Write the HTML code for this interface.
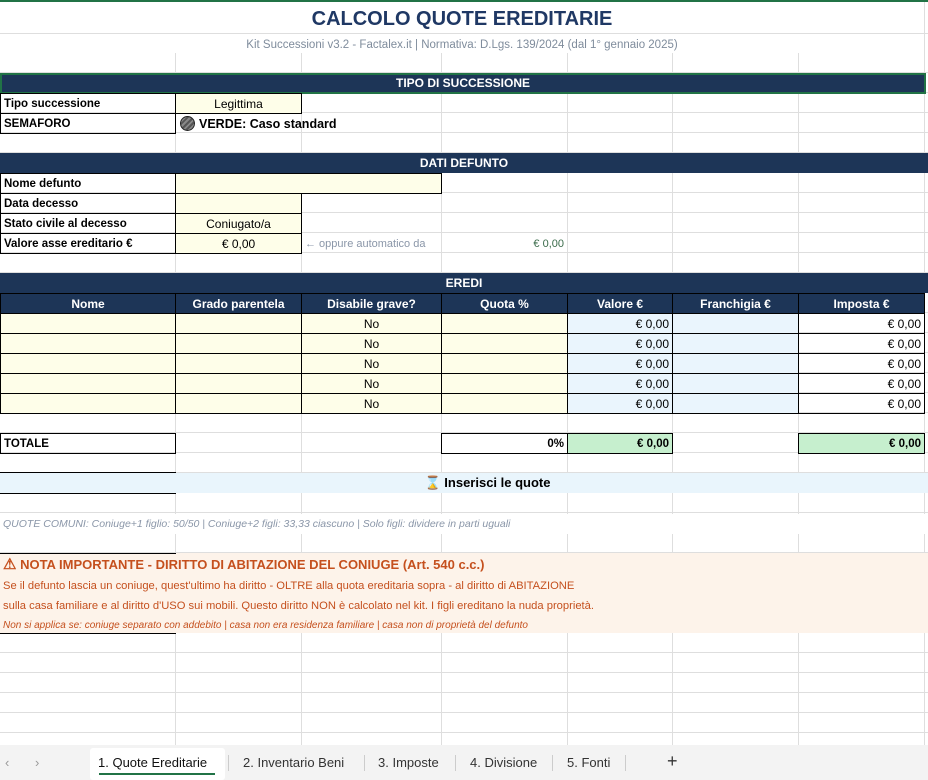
<!DOCTYPE html>
<html style="width:928px;height:780px;overflow:hidden"><head><meta charset="utf-8"><style>
body{margin:0;width:928px;height:780px;overflow:hidden;background:#fff;font-family:"Liberation Sans",sans-serif;position:relative}
.g{position:absolute;left:0;top:53px;width:928px;height:692px;
background-image:repeating-linear-gradient(to bottom,transparent 0,transparent 19px,#dedede 19px,#dedede 20px);}
.v{position:absolute;top:0;width:1px;height:745px;background:#dedede}
.c{position:absolute;height:20px;line-height:20px;font-size:12px;box-sizing:border-box;padding:0 3px;white-space:nowrap;overflow:hidden;color:#000}
.b{font-weight:bold;font-size:11.5px}
.bd{border:1px solid #000}
.hd{background:#1d3557;color:#fff;font-weight:bold;text-align:center;font-size:12px}
.y{background:#fefee9}
.lb{background:#eaf5fd}
.gr{background:#c6efce}
.r{text-align:right}.ct{text-align:center}
</style></head><body>
<div class="g"></div>
<div class="v" style="left:175px;top:53px;height:692px"></div><div class="v" style="left:301px;top:53px;height:692px"></div><div class="v" style="left:441px;top:53px;height:692px"></div><div class="v" style="left:567px;top:53px;height:692px"></div><div class="v" style="left:672px;top:53px;height:692px"></div><div class="v" style="left:798px;top:53px;height:692px"></div><div class="v" style="left:924px;top:0"></div>
<div style="position:absolute;left:0;top:33px;width:928px;height:1px;background:#dedede"></div>
<div style="position:absolute;left:0;top:0;width:928px;height:2px;background:#217346"></div>
<div class="c" style="left:0;top:3px;width:924px;height:32px;line-height:32px;text-align:center;font-size:20px;font-weight:bold;color:#1f3864">CALCOLO QUOTE EREDITARIE</div>
<div class="c" style="left:0;top:35px;width:924px;text-align:center;font-size:11.5px;color:#7f8c9c">Kit Successioni v3.2 - Factalex.it | Normativa: D.Lgs. 139/2024 (dal 1° gennaio 2025)</div>

<div class="c hd" style="left:0;top:73px;width:926px;height:21px;border:2px solid #217346;line-height:17px">TIPO DI SUCCESSIONE</div>
<div class="c b bd" style="left:0;top:93px;width:176px;height:21px">Tipo successione</div>
<div class="c y bd ct" style="left:175px;top:93px;width:127px;height:21px">Legittima</div>
<div class="c b bd" style="left:0;top:113px;width:176px;height:21px">SEMAFORO</div>
<div class="c b" style="left:177px;top:114px;width:250px;font-size:12.5px"><span style="display:inline-block;width:13px;height:13px;border-radius:50%;background:repeating-linear-gradient(135deg,#555 0,#555 2px,#888 2px,#888 4px);border:1px solid #222;vertical-align:-3px;margin-right:4px"></span>VERDE: Caso standard</div>

<div class="c hd" style="left:0;top:153px;width:928px">DATI DEFUNTO</div>
<div class="c b bd" style="left:0;top:173px;width:176px;height:21px">Nome defunto</div>
<div class="c y bd" style="left:175px;top:173px;width:267px;height:21px"></div>
<div class="c b bd" style="left:0;top:193px;width:176px;height:21px">Data decesso</div>
<div class="c y bd" style="left:175px;top:193px;width:127px;height:21px"></div>
<div class="c b bd" style="left:0;top:213px;width:176px;height:21px">Stato civile al decesso</div>
<div class="c y bd ct" style="left:175px;top:213px;width:127px;height:21px">Coniugato/a</div>
<div class="c b bd" style="left:0;top:233px;width:176px;height:21px">Valore asse ereditario €</div>
<div class="c y bd ct" style="left:175px;top:233px;width:127px;height:21px">€ 0,00</div>
<div class="c" style="left:302px;top:234px;font-size:11px;color:#8a96a8">← oppure automatico da</div>
<div class="c r" style="left:441px;top:234px;width:126px;font-size:11px;color:#3a6b4a">€ 0,00</div>

<div class="c hd" style="left:0;top:273px;width:928px">EREDI</div>
<div class="c hd bd" style="left:0;top:293px;width:176px;height:21px">Nome</div>
<div class="c hd bd" style="left:175px;top:293px;width:127px;height:21px">Grado parentela</div>
<div class="c hd bd" style="left:301px;top:293px;width:141px;height:21px">Disabile grave?</div>
<div class="c hd bd" style="left:441px;top:293px;width:127px;height:21px">Quota %</div>
<div class="c hd bd" style="left:567px;top:293px;width:106px;height:21px">Valore €</div>
<div class="c hd bd" style="left:672px;top:293px;width:127px;height:21px">Franchigia €</div>
<div class="c hd bd" style="left:798px;top:293px;width:127px;height:21px">Imposta €</div>

<div class="c y bd" style="left:0;top:313px;width:176px;height:21px"></div><div class="c y bd" style="left:175px;top:313px;width:127px;height:21px"></div><div class="c y bd ct" style="left:301px;top:313px;width:141px;height:21px">No</div><div class="c y bd" style="left:441px;top:313px;width:127px;height:21px"></div><div class="c lb bd r" style="left:567px;top:313px;width:106px;height:21px">€ 0,00</div><div class="c lb bd" style="left:672px;top:313px;width:127px;height:21px"></div><div class="c bd r" style="left:798px;top:313px;width:127px;height:21px">€ 0,00</div>
<div class="c y bd" style="left:0;top:333px;width:176px;height:21px"></div><div class="c y bd" style="left:175px;top:333px;width:127px;height:21px"></div><div class="c y bd ct" style="left:301px;top:333px;width:141px;height:21px">No</div><div class="c y bd" style="left:441px;top:333px;width:127px;height:21px"></div><div class="c lb bd r" style="left:567px;top:333px;width:106px;height:21px">€ 0,00</div><div class="c lb bd" style="left:672px;top:333px;width:127px;height:21px"></div><div class="c bd r" style="left:798px;top:333px;width:127px;height:21px">€ 0,00</div>
<div class="c y bd" style="left:0;top:353px;width:176px;height:21px"></div><div class="c y bd" style="left:175px;top:353px;width:127px;height:21px"></div><div class="c y bd ct" style="left:301px;top:353px;width:141px;height:21px">No</div><div class="c y bd" style="left:441px;top:353px;width:127px;height:21px"></div><div class="c lb bd r" style="left:567px;top:353px;width:106px;height:21px">€ 0,00</div><div class="c lb bd" style="left:672px;top:353px;width:127px;height:21px"></div><div class="c bd r" style="left:798px;top:353px;width:127px;height:21px">€ 0,00</div>
<div class="c y bd" style="left:0;top:373px;width:176px;height:21px"></div><div class="c y bd" style="left:175px;top:373px;width:127px;height:21px"></div><div class="c y bd ct" style="left:301px;top:373px;width:141px;height:21px">No</div><div class="c y bd" style="left:441px;top:373px;width:127px;height:21px"></div><div class="c lb bd r" style="left:567px;top:373px;width:106px;height:21px">€ 0,00</div><div class="c lb bd" style="left:672px;top:373px;width:127px;height:21px"></div><div class="c bd r" style="left:798px;top:373px;width:127px;height:21px">€ 0,00</div>
<div class="c y bd" style="left:0;top:393px;width:176px;height:21px"></div><div class="c y bd" style="left:175px;top:393px;width:127px;height:21px"></div><div class="c y bd ct" style="left:301px;top:393px;width:141px;height:21px">No</div><div class="c y bd" style="left:441px;top:393px;width:127px;height:21px"></div><div class="c lb bd r" style="left:567px;top:393px;width:106px;height:21px">€ 0,00</div><div class="c lb bd" style="left:672px;top:393px;width:127px;height:21px"></div><div class="c bd r" style="left:798px;top:393px;width:127px;height:21px">€ 0,00</div>

<div class="c b bd" style="left:0;top:433px;width:176px;height:21px">TOTALE</div>
<div class="c b bd r" style="left:441px;top:433px;width:127px;height:21px;background:#fff">0%</div>
<div class="c b bd r gr" style="left:567px;top:433px;width:106px;height:21px">€ 0,00</div>
<div class="c b bd r gr" style="left:798px;top:433px;width:127px;height:21px">€ 0,00</div>
<div style="position:absolute;left:0;top:472px;width:176px;height:1px;background:#000"></div>
<div class="c b" style="left:0;top:473px;width:928px;background:#e9f5fc;text-align:center;font-size:13px;padding-left:50px">⌛ Inserisci le quote</div>
<div style="position:absolute;left:0;top:493px;width:176px;height:1px;background:#000"></div>
<div class="c" style="left:0;top:514px;width:928px;background:#fff;font-size:10.5px;font-style:italic;color:#8a96a8">QUOTE COMUNI: Coniuge+1 figlio: 50/50 | Coniuge+2 figli: 33,33 ciascuno | Solo figli: dividere in parti uguali</div>

<div style="position:absolute;left:0;top:553px;width:928px;height:80px;background:#fdf3ea"></div>
<div style="position:absolute;left:0;top:553px;width:176px;height:1px;background:#000"></div>
<div style="position:absolute;left:0;top:633px;width:176px;height:1px;background:#000"></div>
<div class="c b" style="left:0;top:555px;font-size:13px;color:#c5501e"><span style="font-size:15px">⚠</span> NOTA IMPORTANTE - DIRITTO DI ABITAZIONE DEL CONIUGE (Art. 540 c.c.)</div>
<div class="c" style="left:0;top:576px;font-size:11.2px;color:#c5501e">Se il defunto lascia un coniuge, quest'ultimo ha diritto - OLTRE alla quota ereditaria sopra - al diritto di ABITAZIONE</div>
<div class="c" style="left:0;top:596px;font-size:11.2px;color:#c5501e">sulla casa familiare e al diritto d'USO sui mobili. Questo diritto NON è calcolato nel kit. I figli ereditano la nuda proprietà.</div>
<div class="c" style="left:0;top:616px;font-size:10px;font-style:italic;color:#c5501e">Non si applica se: coniuge separato con addebito | casa non era residenza familiare | casa non di proprietà del defunto</div>

<div style="position:absolute;left:0;top:745px;width:928px;height:35px;background:#f3f3f3;font-size:13px;color:#333">
<span style="position:absolute;left:5px;top:10px;color:#999">‹</span><span style="position:absolute;left:35px;top:10px;color:#999">›</span>
<div style="position:absolute;left:90px;top:3px;width:135px;height:32px;background:#fff;border-radius:3px"></div>
<span style="position:absolute;left:98px;top:10px;color:#111">1. Quote Ereditarie</span>
<div style="position:absolute;left:99px;top:28px;width:116px;height:2px;background:#217346"></div>
<span style="position:absolute;left:228px;top:10px;width:1px;height:16px;background:#ccc"></span>
<span style="position:absolute;left:243px;top:10px">2. Inventario Beni</span>
<span style="position:absolute;left:364px;top:10px;width:1px;height:16px;background:#ccc"></span>
<span style="position:absolute;left:378px;top:10px">3. Imposte</span>
<span style="position:absolute;left:455px;top:10px;width:1px;height:16px;background:#ccc"></span>
<span style="position:absolute;left:470px;top:10px">4. Divisione</span>
<span style="position:absolute;left:552px;top:10px;width:1px;height:16px;background:#ccc"></span>
<span style="position:absolute;left:567px;top:10px">5. Fonti</span>
<span style="position:absolute;left:625px;top:10px;width:1px;height:16px;background:#ccc"></span>
<span style="position:absolute;left:667px;top:6px;font-size:18px">+</span>
</div>
</body></html>
